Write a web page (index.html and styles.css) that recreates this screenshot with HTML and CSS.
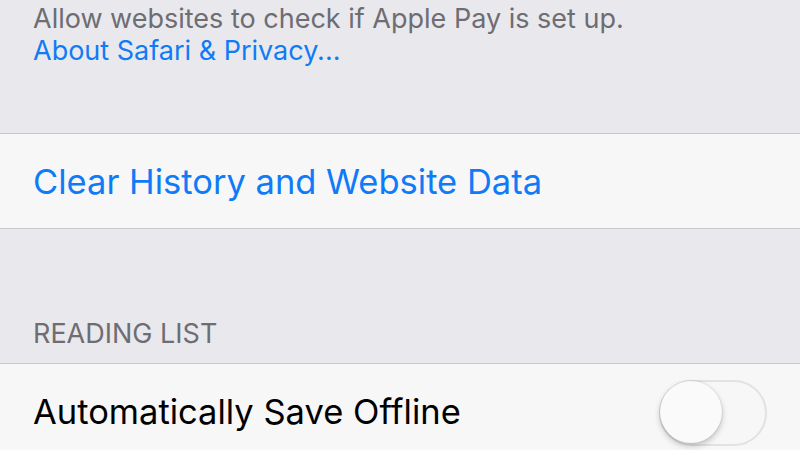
FILE: index.html
```html
<!DOCTYPE html>
<html lang="en">
<head>
    <meta charset="UTF-8">
    <title>Safari Settings</title>
    <link rel="stylesheet" href="styles.css">
</head>
<body>

<div class="settings">
    <!-- ===== PRIVACY FOOTER ===== -->
    <div class="group-footer">
        <p>Allow websites to check if Apple Pay is set up.</p>
        <a href="#">About Safari &amp; Privacy...</a>
    </div>

    <!-- ===== CLEAR HISTORY ===== -->
    <div class="group">
        <div class="cell">
            <span class="cell-action">Clear History and Website Data</span>
        </div>
    </div>

    <!-- ===== READING LIST ===== -->
    <div class="group-header">READING LIST</div>
    <div class="group">
        <div class="cell">
            <span class="cell-label">Automatically Save Offline</span>
            <span class="switch"><span class="knob"></span></span>
        </div>
    </div>
</div>

</body>
</html>
```

FILE: styles.css
```css
:root {
    --group-bg: #e9e8ed;
    --cell-bg: #f7f7f7;
    --separator: #c8c7cc;
    --blue: #0f7bf6;
    --muted: #6d6d72;
    --font-family: Inter, Roboto, "Liberation Sans", sans-serif;
}
body {
    margin: 0;
    background-color: var(--group-bg);
    font-family: var(--font-family);
    color: #000;
}
.settings {
    width: 800px;
    height: 450px;
    overflow: hidden;
}
.group-footer {
    padding: 3px 33px 0;
    font-size: 27px;
    line-height: 32px;
    color: var(--muted);
    height: 133px;
    box-sizing: border-box;
}
.group-footer p {
    margin: 0;
}
.group-footer a {
    color: var(--blue);
    text-decoration: none;
}
.group {
    background-color: var(--cell-bg);
    border-top: 1px solid var(--separator);
    border-bottom: 1px solid var(--separator);
}
.cell {
    display: flex;
    align-items: center;
    justify-content: space-between;
    height: 94px;
    padding: 0 33px;
    font-size: 34.5px;
}
.cell-action {
    color: var(--blue);
}
.group-header {
    padding: 0 33px 13px;
    margin-top: 89px;
    font-size: 27px;
    color: var(--muted);
    line-height: 32px;
}
.switch {
    position: relative;
    width: 104px;
    height: 62px;
    margin-top: 4px;
    border: 2px solid #e2e2e2;
    border-radius: 33px;
    background-color: var(--cell-bg);
}
.knob {
    position: absolute;
    left: -1px;
    top: -1px;
    width: 62px;
    height: 62px;
    border-radius: 50%;
    background-color: #fafafa;
    box-shadow: 0 3px 6px rgba(0, 0, 0, 0.22), 0 0 0 1px rgba(0, 0, 0, 0.06);
}
```
